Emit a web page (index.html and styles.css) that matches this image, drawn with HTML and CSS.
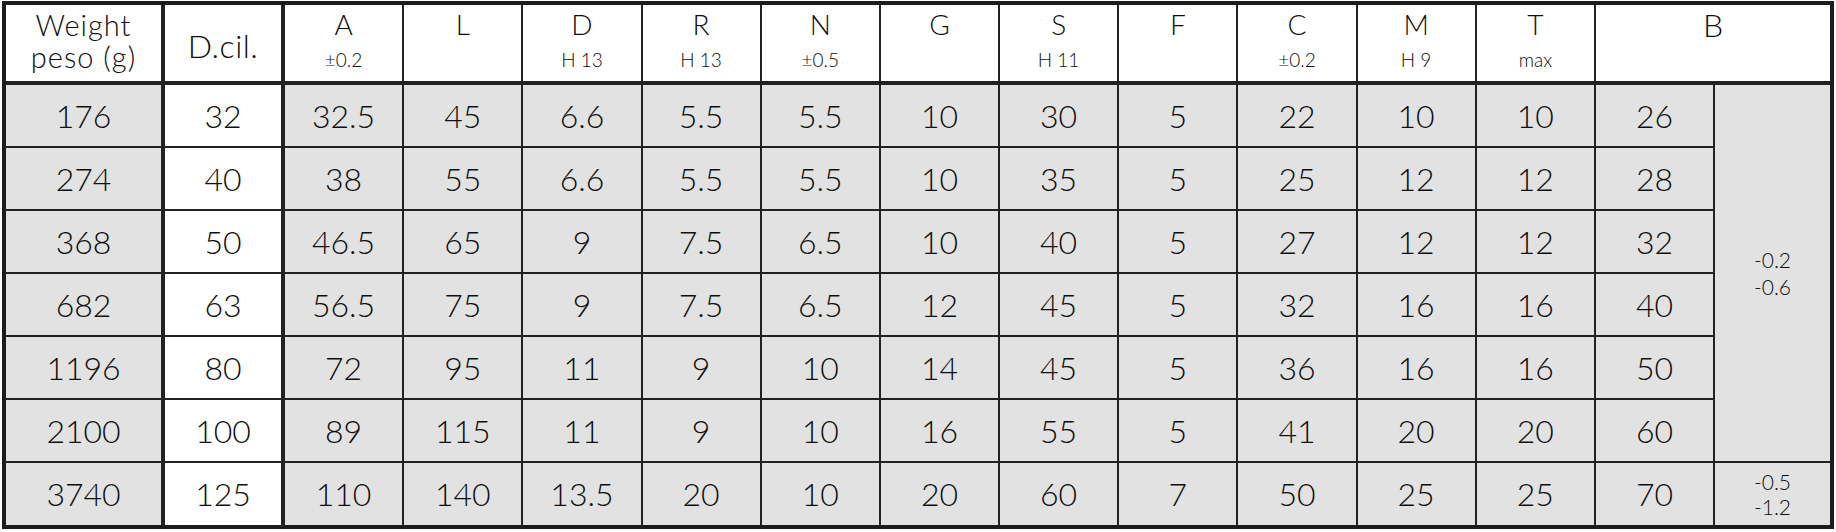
FILE: index.html
```html
<!DOCTYPE html>
<html lang="it">
<head>
<meta charset="utf-8">
<title>Tabella dimensioni</title>
<link rel="stylesheet" href="styles.css">
</head>
<body>
<div class="wrap">
<table class="spec">
  <colgroup>
    <col class="col-w">
    <col class="col-d">
    <col><col><col><col><col><col><col><col><col><col><col>
    <col class="col-b1">
    <col class="col-b2">
  </colgroup>
  <thead>
    <tr>
      <th class="thick hw"><span class="two">Weight</span><span class="two">peso (g)</span></th>
      <th class="thick hd"><span class="big">D.cil.</span></th>
      <th><span class="main">A</span><span class="sub">±0.2</span></th>
      <th><span class="main">L</span></th>
      <th><span class="main">D</span><span class="sub">H 13</span></th>
      <th><span class="main">R</span><span class="sub">H 13</span></th>
      <th><span class="main">N</span><span class="sub">±0.5</span></th>
      <th><span class="main">G</span></th>
      <th><span class="main">S</span><span class="sub">H 11</span></th>
      <th><span class="main">F</span></th>
      <th><span class="main">C</span><span class="sub">±0.2</span></th>
      <th><span class="main">M</span><span class="sub">H 9</span></th>
      <th><span class="main">T</span><span class="sub">max</span></th>
      <th class="last hb" colspan="2"><span class="bigb">B</span></th>
    </tr>
  </thead>
  <tbody>
    <tr>
      <td class="thick">176</td><td class="thick white">32</td>
      <td>32.5</td><td>45</td><td>6.6</td><td>5.5</td><td>5.5</td><td>10</td><td>30</td><td>5</td><td>22</td><td>10</td><td>10</td><td>26</td>
      <td class="last tol" rowspan="6">-0.2<br>-0.6</td>
    </tr>
    <tr>
      <td class="thick">274</td><td class="thick white">40</td>
      <td>38</td><td>55</td><td>6.6</td><td>5.5</td><td>5.5</td><td>10</td><td>35</td><td>5</td><td>25</td><td>12</td><td>12</td><td>28</td>
    </tr>
    <tr>
      <td class="thick">368</td><td class="thick white">50</td>
      <td>46.5</td><td>65</td><td>9</td><td>7.5</td><td>6.5</td><td>10</td><td>40</td><td>5</td><td>27</td><td>12</td><td>12</td><td>32</td>
    </tr>
    <tr>
      <td class="thick">682</td><td class="thick white">63</td>
      <td>56.5</td><td>75</td><td>9</td><td>7.5</td><td>6.5</td><td>12</td><td>45</td><td>5</td><td>32</td><td>16</td><td>16</td><td>40</td>
    </tr>
    <tr>
      <td class="thick">1196</td><td class="thick white">80</td>
      <td>72</td><td>95</td><td>11</td><td>9</td><td>10</td><td>14</td><td>45</td><td>5</td><td>36</td><td>16</td><td>16</td><td>50</td>
    </tr>
    <tr>
      <td class="thick">2100</td><td class="thick white">100</td>
      <td>89</td><td>115</td><td>11</td><td>9</td><td>10</td><td>16</td><td>55</td><td>5</td><td>41</td><td>20</td><td>20</td><td>60</td>
    </tr>
    <tr class="end">
      <td class="thick">3740</td><td class="thick white">125</td>
      <td>110</td><td>140</td><td>13.5</td><td>20</td><td>10</td><td>20</td><td>60</td><td>7</td><td>50</td><td>25</td><td>25</td><td>70</td>
      <td class="last tol tol2">-0.5<br>-1.2</td>
    </tr>
  </tbody>
</table>
</div>
</body>
</html>
```

FILE: styles.css
```css
html, body {
  margin: 0;
  padding: 0;
  background: #ffffff;
}

.wrap {
  padding: 1px 2px 0 2px;
}

.spec {
  border-collapse: separate;
  border-spacing: 0;
  table-layout: fixed;
  width: 1832px;
  border: 4px solid #1c1c1c;
  font-family: "Lato", "DejaVu Sans", sans-serif;
  font-weight: 300;
  color: #0e0e0e;
}

.col-w { width: 159px; }
.col-d { width: 120px; }
.col-b1 { width: 119px; }
.col-b2 { width: 115px; }

.spec th,
.spec td {
  box-sizing: border-box;
  padding: 0;
  text-align: center;
  border-right: 2px solid #222222;
  border-bottom: 2px solid #222222;
}

.spec thead tr { height: 80px; }

.spec th {
  background: #ffffff;
  border-bottom-width: 4px;
  vertical-align: top;
  padding-top: 4px;
  font-weight: 300;
}

.spec th .main {
  display: block;
  font-size: 28px;
  line-height: 31px;
}

.spec th .two {
  display: block;
  font-size: 29px;
  line-height: 31px;
  letter-spacing: 1px;
  white-space: nowrap;
}

.spec th .two + .two {
  margin-top: 1px;
}

.spec th .sub {
  display: block;
  font-size: 19px;
  line-height: 24px;
  margin-top: 8px;
}

.spec th.hd {
  vertical-align: middle;
  padding-top: 6px;
}

.spec th .big {
  font-size: 32px;
  line-height: 34px;
  letter-spacing: 0.5px;
}

.spec th .bigb {
  display: block;
  font-size: 32px;
  line-height: 31px;
}

.spec tbody tr { height: 63px; }
.spec tbody tr.end { height: 62px; }

.spec td {
  background: #e1e2e1;
  vertical-align: middle;
  font-size: 32px;
  line-height: 36px;
}

.spec td.white { background: #ffffff; }

.spec .thick { border-right-width: 4px; }
.spec .last { border-right: 0; }
.spec tr.end td { border-bottom: 0; }

.spec td.tol {
  font-size: 21px;
  line-height: 27px;
}

.spec td.tol2 {
  line-height: 25px;
}
```
